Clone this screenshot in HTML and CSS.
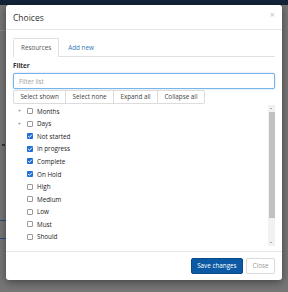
FILE: index.html
```html
<!DOCTYPE html>
<html>
  <head>
    <meta http-equiv="Content-Type" content="text/html; charset=utf-8"/>
    <title>Choices</title>
    <link rel="stylesheet" href="styles.css">
  </head>
  <body>
  <div class="navbar"></div>
  <div class="stage">
    <div class="side">
      <div class="side-line grey"></div>
      <div class="side-mark"></div>
      <div class="side-line blue first"></div>
      <div class="side-line blue second"></div>
    </div>
    <div class="modal">

      <div class="modal-header">
        <span class="modal-title">Choices</span>
        <span class="close">&times;</span>
      </div>

      <div class="modal-body">
        <ul class="tabs">
          <li class="tab active">Resources</li>
          <li class="tab">Add new</li>
        </ul>

        <div class="filter-label">Filter</div>
        <input class="filter-input" type="text" placeholder="Filter list">

        <div class="btn-group">
          <span class="btn">Select shown</span>
          <span class="btn">Select none</span>
          <span class="btn">Expand all</span>
          <span class="btn">Collapse all</span>
        </div>

        <div class="tree">
          <ul class="tree-list">
            <li class="row"><span class="toggle">+</span><span class="check"></span>Months</li>
            <li class="row"><span class="toggle">+</span><span class="check"></span>Days</li>
            <li class="row"><span class="toggle"></span><span class="check on"><svg viewBox="0 0 6 6"><path d="M1.2 3.1 L2.5 4.3 L4.9 1.6" fill="none" stroke="#fff" stroke-width="1"/></svg></span>Not started</li>
            <li class="row"><span class="toggle"></span><span class="check on"><svg viewBox="0 0 6 6"><path d="M1.2 3.1 L2.5 4.3 L4.9 1.6" fill="none" stroke="#fff" stroke-width="1"/></svg></span>In progress</li>
            <li class="row"><span class="toggle"></span><span class="check on"><svg viewBox="0 0 6 6"><path d="M1.2 3.1 L2.5 4.3 L4.9 1.6" fill="none" stroke="#fff" stroke-width="1"/></svg></span>Complete</li>
            <li class="row"><span class="toggle"></span><span class="check on"><svg viewBox="0 0 6 6"><path d="M1.2 3.1 L2.5 4.3 L4.9 1.6" fill="none" stroke="#fff" stroke-width="1"/></svg></span>On Hold</li>
            <li class="row"><span class="toggle"></span><span class="check"></span>High</li>
            <li class="row"><span class="toggle"></span><span class="check"></span>Medium</li>
            <li class="row"><span class="toggle"></span><span class="check"></span>Low</li>
            <li class="row"><span class="toggle"></span><span class="check"></span>Must</li>
            <li class="row"><span class="toggle"></span><span class="check"></span>Should</li>
          </ul>
          <div class="scrollbar">
            <div class="arrow up"></div>
            <div class="thumb"></div>
            <div class="arrow down"></div>
          </div>
        </div>
      </div>

      <div class="modal-footer">
        <span class="btn primary">Save changes</span>
        <span class="btn plain">Close</span>
      </div>

    </div>
  </div>
  </body>
</html>
```

FILE: styles.css
```css
body { margin: 0; background: #767676; font-family: "Open Sans", "DejaVu Sans", sans-serif; font-size: 6.3px; color: #333; }
.navbar { height: 5px; background: #13243a; }
.stage { display: flex; padding: 0 6px 12px 0; }

/* page behind the backdrop */
.side { width: 6px; display: flex; flex-direction: column; }
.side-line { height: 1px; }
.side-line.grey { background: #888; margin-top: 25px; }
.side-line.blue { background: #1d4f86; }
.side-line.first { margin-top: 74px; }
.side-line.second { margin-top: 17px; }
.side-mark { width: 3px; height: 2px; margin: 113px 0 0 2px; background: #333; }

.modal { width: 276px; background: #fff; border-radius: 3px; box-shadow: 0 2px 8px rgba(0,0,0,0.45); }

.modal-header { height: 24px; border-bottom: 1px solid #e8e8e8; display: flex; justify-content: space-between; align-items: center; padding: 0 7px; }
.modal-title { font-size: 8.5px; color: #333; margin-top: 1px; }
.close { font-size: 9px; color: #c4c4c4; margin-top: -5px; }

.modal-body { padding: 8px 7px 5px 7px; }

.tabs { list-style: none; margin: 0; padding: 0; display: flex; border-bottom: 1px solid #e0e0e0; height: 18px; }
.tab { height: 17px; line-height: 17px; padding: 0 7px; margin-right: 1px; color: #337ab7; border: 1px solid transparent; border-bottom: none; border-radius: 2px 2px 0 0; }
.tab.active { color: #555; background: #fff; border-color: #e0e0e0; height: 18px; }

.filter-label { font-weight: bold; margin-top: 4px; line-height: 9px; height: 9px; }

.filter-input { display: block; box-sizing: border-box; width: 100%; height: 16px; margin: 3px 0 0 0; padding: 0 5px; border: 1px solid #79b5e6; border-radius: 2px; box-shadow: 0 0 2px rgba(102,175,233,0.6); font-family: inherit; font-size: 6.3px; color: #333; outline: none; }
.filter-input::placeholder { color: #a0a0a0; }

.btn-group { display: flex; margin-top: 1px; }
.btn-group .btn { height: 14px; line-height: 12px; box-sizing: border-box; padding: 0 6.4px; border: 1px solid #dcdcdc; margin-left: -1px; background: #fff; color: #444; }
.btn-group .btn:first-child { margin-left: 0; border-radius: 2px 0 0 2px; }
.btn-group .btn:last-child { border-radius: 0 2px 2px 0; }

.tree { display: flex; height: 141px; margin-top: 1px; }
.tree-list { list-style: none; margin: 0; padding: 0; flex: 1; }
.row { display: flex; align-items: center; height: 12.55px; color: #222; }
.toggle { width: 14px; padding-left: 5px; box-sizing: border-box; font-size: 5px; color: #777; }
.check { width: 6px; height: 6px; box-sizing: border-box; border: 1px solid #9a9a9a; border-radius: 1px; margin-right: 4px; background: #fff; }
.check.on { border: none; background: #1f6fd6; }
.check svg { display: block; width: 6px; height: 6px; }

.scrollbar { width: 7px; background: #f1f1f1; display: flex; flex-direction: column; }
.arrow { height: 7px; position: relative; }
.arrow.up::after { content: ""; position: absolute; left: 2px; top: 3px; border-left: 1.5px solid transparent; border-right: 1.5px solid transparent; border-bottom: 1.5px solid #666; }
.arrow.down::after { content: ""; position: absolute; left: 2px; top: 3px; border-left: 1.5px solid transparent; border-right: 1.5px solid transparent; border-top: 1.5px solid #666; }
.thumb { margin: 0 0.5px; height: 106px; background: #c1c1c1; }
.scrollbar .arrow.down { margin-top: auto; }

.modal-footer { border-top: 1px solid #e8e8e8; padding: 6px 7px 6px 7px; display: flex; justify-content: flex-end; gap: 3px; }
.modal-footer .btn { height: 16px; line-height: 14px; box-sizing: border-box; padding: 0 5.5px; border-radius: 2px; border: 1px solid #ccc; }
.btn.primary { background: #0b5aa3; border-color: #084b8a; color: #fff; }
.btn.plain { background: #fff; color: #999; border-color: #dadada; }
```
